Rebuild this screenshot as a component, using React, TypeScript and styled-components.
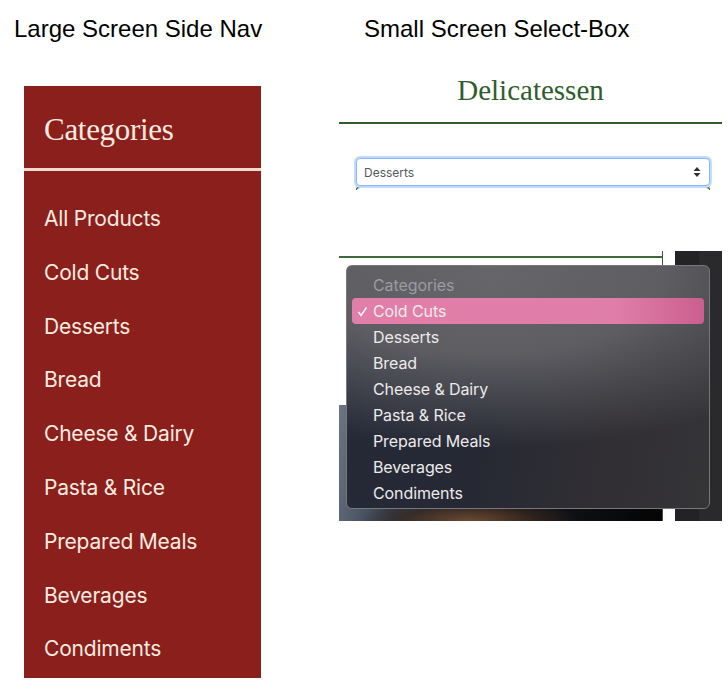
import React from 'react';
import styled, {createGlobalStyle} from 'styled-components';

const GlobalStyle = createGlobalStyle`
    html, body {
        margin: 0;
        padding: 0;
        background: white;
    }
`;

const Page = styled.div`
    width: 728px;
    height: 694px;
    overflow: hidden;
    display: grid;
    grid-template-columns: 339px 383px;
    font-family: "Liberation Sans", Arial, sans-serif;
`;

const LeftColumn = styled.section`
    padding: 14px 0 0 14px;
`;

const RightColumn = styled.section`
    padding-top: 14px;
`;

const Caption = styled.h2`
    margin: 0;
    height: 30px;
    font-size: 24px;
    line-height: 30px;
    font-weight: 400;
    color: black;
    white-space: nowrap;

    &.right {
        padding-left: 25px;
    }
`;

const SideNav = styled.nav`
    margin: 42px 0 0 10px;
    width: 237px;
    height: 592px;
    background: #8a1f1c;
    color: #f7ebe0;
`;

const NavTitle = styled.div`
    height: 85px;
    box-sizing: border-box;
    padding: 26px 0 0 20px;
    border-bottom: 3px solid #f0d9cf;
    font-family: "Liberation Serif", serif;
    font-size: 31px;
    line-height: 36px;
    letter-spacing: -0.3px;
`;

const NavList = styled.ul`
    list-style: none;
    margin: 0;
    padding: 21px 0 0 20px;
`;

const NavItem = styled.li`
    height: 53.8px;
    line-height: 53.8px;
    font-family: Inter, "Noto Sans", sans-serif;
    font-size: 21px;
    font-weight: 400;
    letter-spacing: -0.2px;
    white-space: nowrap;
`;

const BrandHeader = styled.header`
    margin-top: 28px;
    height: 50px;
    border-bottom: 2px solid #2f5e2c;
    text-align: center;
    font-family: "Liberation Serif", serif;
    font-size: 29px;
    line-height: 36px;
    color: #2f5e2c;
`;

const SelectWrap = styled.div`
    margin: 34px 12px 0 17px;
    height: 32px;
`;

const SelectBox = styled.div`
    height: 28px;
    box-sizing: border-box;
    padding: 0 8px 0 7px;
    display: flex;
    align-items: center;
    justify-content: space-between;
    background: white;
    border: 1px solid #86b7fe;
    border-radius: 4px;
    box-shadow: 0 0 0 2px #c2dbfe;
    position: relative;
    z-index: 1;
    font-family: Inter, sans-serif;
    font-size: 12px;
    color: #54595f;
`;

const SelectTail = styled.div`
    height: 4px;
    border: 1px solid #2f5e2c;
    border-width: 2px 1px 0;
    border-radius: 4px 4px 0 0;
    box-sizing: border-box;
`;

const Preview = styled.div`
    position: relative;
    margin-top: 61px;
    height: 270px;
    display: flex;
    justify-content: space-between;
`;

const PreviewMain = styled.div`
    width: 323px;
    display: flex;
    flex-direction: column;
    justify-content: flex-end;
    border-right: 1px solid #2f5e2c;
`;

const GreenRule = styled.div`
    margin-bottom: 147px;
    height: 2px;
    background: #3c6a39;
`;

const HeroImage = styled.div`
    height: 116px;
    background:
        radial-gradient(ellipse 110px 24px at 130px 116px, #6b4a30 0%, rgba(60, 40, 30, 0.7) 60%, transparent 100%),
        linear-gradient(100deg, #6d7583 0%, #2e3a4a 22%, #15181f 55%, #040404 100%);
`;

const DarkStrip = styled.div`
    width: 47px;
    background: linear-gradient(90deg, #232325 0 50%, #2a2a2c 50% 100%);
`;

const Dropdown = styled.ul`
    position: absolute;
    top: 14px;
    left: 7px;
    width: 364px;
    height: 244px;
    box-sizing: border-box;
    margin: 0;
    padding: 6px 5px;
    list-style: none;
    border: 1px solid #77777c;
    border-radius: 6px;
    background:
        radial-gradient(ellipse 380px 170px at 40% 5%, #66666a 0%, #5d5d62 45%, rgba(80, 80, 85, 0) 100%),
        linear-gradient(100deg, #252a38 0%, #262934 40%, #302e33 70%, #353437 100%);
    font-family: Inter, "Noto Sans", sans-serif;
    font-size: 16px;
    color: #eceaea;
`;

const Option = styled.li<{$selected?: boolean; $muted?: boolean}>`
    position: relative;
    height: 26px;
    line-height: 26px;
    padding-left: 21px;
    border-radius: 4px;
    white-space: nowrap;
    letter-spacing: -0.1px;
    color: ${p => p.$muted ? '#9b9ba0' : '#eceaea'};
    background: ${p => p.$selected ? 'linear-gradient(90deg, #e17fa9 0%, #df7ea9 75%, #cb5f8f 100%)' : 'none'};
`;

const Check = styled.svg`
    position: absolute;
    left: 5px;
    top: 8px;
`;

const navItems = ['All Products', 'Cold Cuts', 'Desserts', 'Bread', 'Cheese & Dairy', 'Pasta & Rice', 'Prepared Meals', 'Beverages', 'Condiments'];

export default function App() {
    return <Page>
        <GlobalStyle />
        <LeftColumn>
            <Caption>Large Screen Side Nav</Caption>
            <SideNav>
                <NavTitle>Categories</NavTitle>
                <NavList>
                    {navItems.map(item => <NavItem key={item}>{item}</NavItem>)}
                </NavList>
            </SideNav>
        </LeftColumn>
        <RightColumn>
            <Caption className="right">Small Screen Select-Box</Caption>
            <BrandHeader>Delicatessen</BrandHeader>
            <SelectWrap>
                <SelectBox>
                    Desserts
                    <svg width="8" height="12" viewBox="0 0 8 12">
                        <path d="M4 1 L7.5 5 H0.5 Z M4 11 L7.5 7 H0.5 Z" fill="#333" />
                    </svg>
                </SelectBox>
                <SelectTail />
            </SelectWrap>
            <Preview>
                <PreviewMain>
                    <GreenRule />
                    <HeroImage />
                </PreviewMain>
                <DarkStrip />
                <Dropdown>
                    <Option $muted>Categories</Option>
                    {navItems.slice(1).map(item => (
                        <Option key={item} $selected={item === 'Cold Cuts'}>
                            {item === 'Cold Cuts' && <Check width="11" height="11" viewBox="0 0 11 11">
                                <path d="M1.5 6 L4 9.5 L9.5 1.5" fill="none" stroke="#fff" strokeWidth="1.4" />
                            </Check>}
                            {item}
                        </Option>
                    ))}
                </Dropdown>
            </Preview>
        </RightColumn>
    </Page>;
}
